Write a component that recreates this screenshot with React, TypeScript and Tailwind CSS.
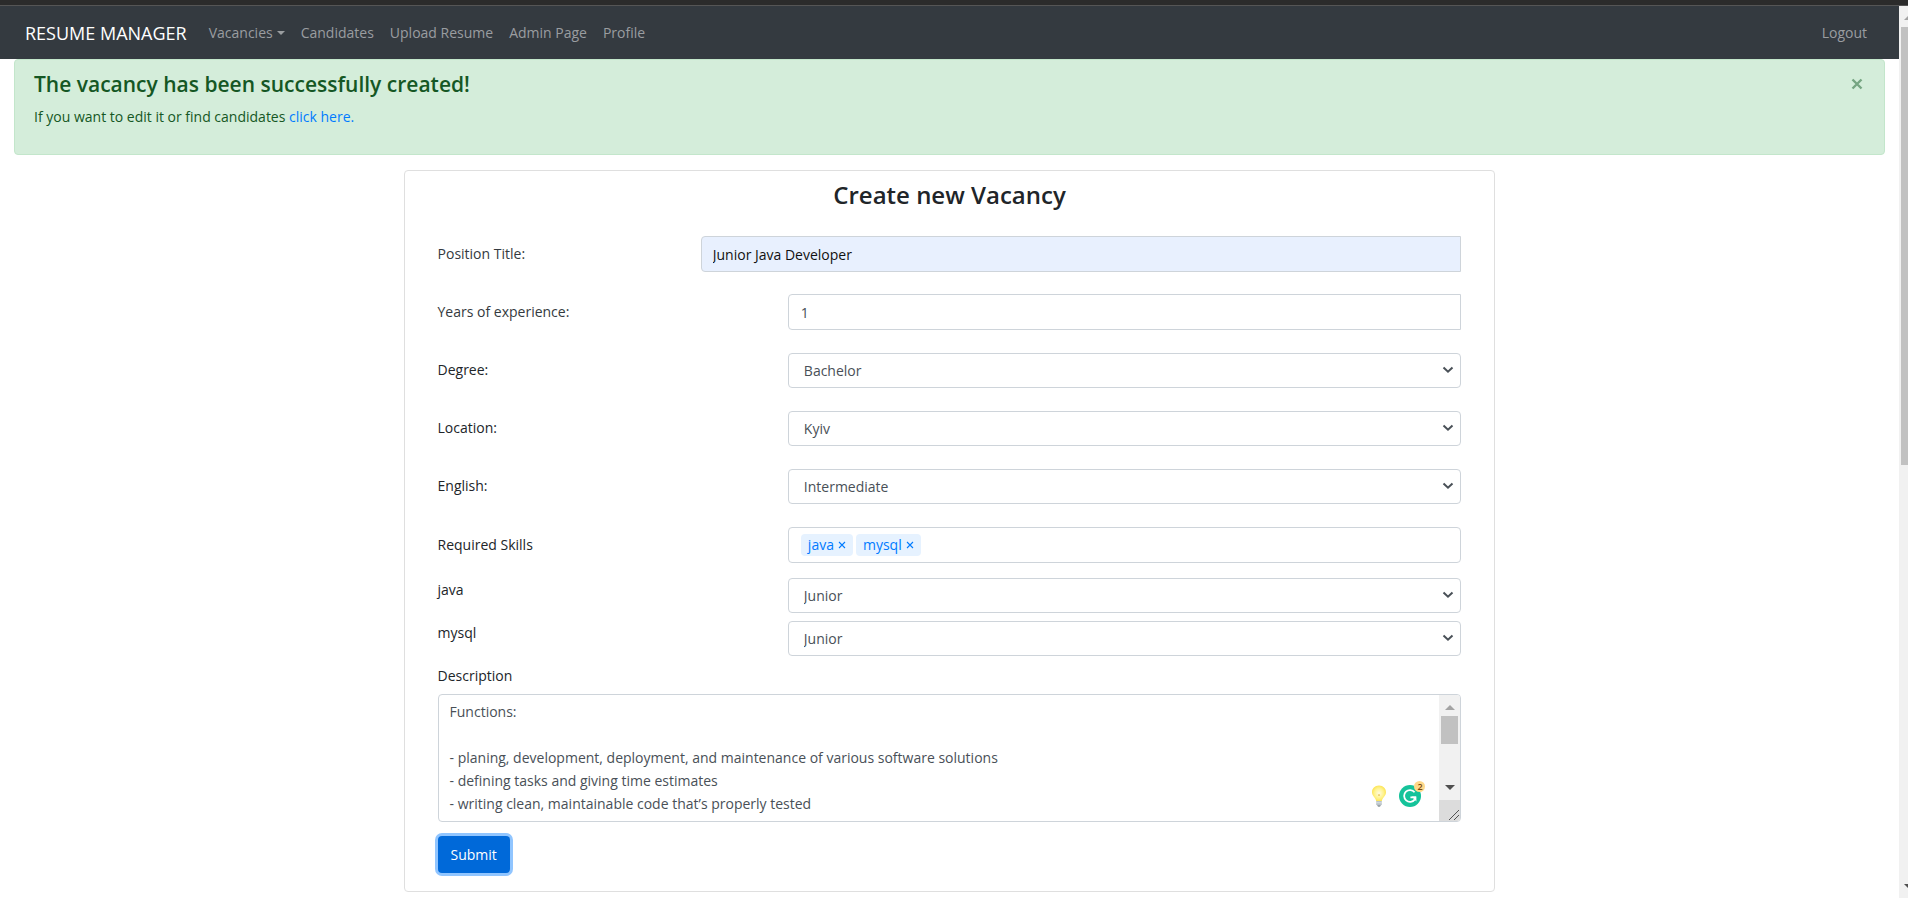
import React, { useState } from "react";

const control =
  "w-full border border-[#ced4da] bg-white text-sm text-[#495057] outline-none";

function SelectBox({ id, options }: { id: string; options: string[] }) {
  return (
    <div className="relative self-end">
      <select id={id} className={`${control} block h-[35px] appearance-none rounded pl-[15px] pr-8`}>
        {options.map((o) => (
          <option key={o}>{o}</option>
        ))}
      </select>
      <svg
        className="pointer-events-none absolute right-[7px] top-[13px] h-2 w-3"
        viewBox="0 0 12 8"
        fill="none"
        stroke="#495057"
        strokeWidth="2"
      >
        <path d="M1.5 1.5 L6 5.7 L10.5 1.5" />
      </svg>
    </div>
  );
}

function SelectRow({ id, label, options }: { id: string; label: string; options: string[] }) {
  return (
    <div className="grid h-9 grid-cols-[350fr_673fr] items-center">
      <label htmlFor={id}>{label}</label>
      <SelectBox id={id} options={options} />
    </div>
  );
}

function LevelRow({ skill }: { skill: string }) {
  const id = `level-${skill}`;
  return (
    <div className="grid grid-cols-[350fr_673fr] items-start">
      <label htmlFor={id} className="leading-6">
        {skill}
      </label>
      <SelectBox id={id} options={["Junior", "Middle", "Senior"]} />
    </div>
  );
}

function Bulb() {
  return (
    <svg className="h-[22px] w-4" viewBox="0 0 16 22">
      <defs>
        <radialGradient id="glow" cx="50%" cy="50%" r="55%">
          <stop offset="0" stopColor="#fffbe0" />
          <stop offset="0.6" stopColor="#fff38c" />
          <stop offset="1" stopColor="#fbe04a" />
        </radialGradient>
      </defs>
      <path
        d="M8 0.5 C3.8 0.5 1 3.5 1 7.2 C1 11 4.6 12.6 5.2 16 H10.8 C11.4 12.6 15 11 15 7.2 C15 3.5 12.2 0.5 8 0.5 Z"
        fill="url(#glow)"
      />
      <path d="M7 10.5 L8 9.6 L9 10.5" stroke="#d9a520" strokeWidth="0.8" fill="none" />
      <path d="M5.2 16 H10.8 V19.5 L9.8 20.5 H6.2 L5.2 19.5 Z" fill="#b9c3c9" />
      <path d="M5.2 17.8 H10.8" stroke="#e3e8ea" strokeWidth="0.8" />
      <path d="M6.2 20.4 H9.8 L9 21.6 H7 Z" fill="#5b666c" />
    </svg>
  );
}

function Checker() {
  return (
    <span className="relative block h-[22px] w-[22px]">
      <svg className="h-[22px] w-[22px]" viewBox="0 0 22 22">
        <circle cx="11" cy="11" r="11" fill="#15c39a" />
        <path
          d="M15.6 7.2 A5.9 5.9 0 1 0 15.8 14.4 M11.4 12.4 H17"
          fill="none"
          stroke="#fff"
          strokeWidth="1.8"
        />
        <path d="M12.6 11.6 H17.4 V16.6 Z" fill="#fff" />
      </svg>
      <span className="absolute -right-1 -top-1 flex h-[11px] w-[11px] items-center justify-center rounded-full bg-[#ffd98a] text-[9px] font-semibold leading-none text-[#7a4a10]">
        2
      </span>
    </span>
  );
}

const DESCRIPTION = `Functions:

- planing, development, deployment, and maintenance of various software solutions
- defining tasks and giving time estimates
- writing clean, maintainable code that’s properly tested`;

export default function App() {
  const [skills, setSkills] = useState(["java", "mysql"]);
  const [open, setOpen] = useState(true);

  return (
    <div className="flex min-h-screen flex-col bg-white font-['Open_Sans','Noto_Sans',sans-serif] text-sm text-[#212529]">
      <div className="h-1.5 border-b border-[#555555] bg-[#2b2b2b]" />
      <div className="flex flex-1">
        <div className="min-w-0 flex-1">
          <nav className="flex h-[53px] items-center bg-[#343a40] pl-[25px] pr-8 text-[#9a9da0]">
            <a href="#home" className="mr-[22px] text-lg text-white">
              RESUME MANAGER
            </a>
            <div className="flex gap-4">
              <a href="#vacancies" className="flex items-center gap-1">
                Vacancies
                <span className="border-x-4 border-t-4 border-x-transparent border-t-[#9a9da0]" />
              </a>
              <a href="#candidates">Candidates</a>
              <a href="#upload">Upload Resume</a>
              <a href="#admin">Admin Page</a>
              <a href="#profile">Profile</a>
            </div>
            <a href="#logout" className="ml-auto">
              Logout
            </a>
          </nav>

          {open && (
            <div
              role="alert"
              className="mx-3.5 flex h-24 items-start justify-between rounded border border-[#c3e6cb] bg-[#d4edda] pl-[19px] pr-[19px] pt-3 text-[#155724]"
            >
              <div>
                <h4 className="mb-2 text-[21px] font-semibold leading-[25px]">
                  The vacancy has been successfully created!
                </h4>
                <p className="leading-[23px]">
                  If you want to edit it or find candidates{" "}
                  <a href="#vacancy" className="text-[#007bff]">
                    click here.
                  </a>
                </p>
              </div>
              <button type="button" aria-label="Close" onClick={() => setOpen(false)} className="pt-1">
                <svg className="h-4 w-4" viewBox="0 0 16 16" stroke="#76a582" strokeWidth="2.4">
                  <path d="M3.5 3.5 L12.5 12.5 M12.5 3.5 L3.5 12.5" />
                </svg>
              </button>
            </div>
          )}

          <form
            onSubmit={(e) => e.preventDefault()}
            className="mx-auto mb-1.5 mt-[15px] w-[57.5%] rounded border border-[#dfdfdf] px-[33px] pb-[18px] pt-2"
          >
            <h3 className="mb-[25px] text-center text-2xl font-semibold leading-8">Create new Vacancy</h3>

            <div className="flex flex-col gap-[22px]">
              <div className="grid h-9 grid-cols-[263fr_760fr] items-center">
                <label htmlFor="title" className="text-[#343a40]">
                  Position Title:
                </label>
                <input
                  id="title"
                  defaultValue="Junior Java Developer"
                  className="h-9 w-full rounded-l border border-[#ced4da] bg-[#e8f0fe] px-[11px] text-sm text-[#111111] outline-none"
                />
              </div>
              <div className="grid h-9 grid-cols-[350fr_673fr] items-center">
                <label htmlFor="years" className="text-[#343a40]">
                  Years of experience:
                </label>
                <input id="years" defaultValue="1" className={`${control} h-9 rounded-l px-3`} />
              </div>
              <SelectRow id="degree" label="Degree:" options={["Bachelor", "Master"]} />
              <SelectRow id="location" label="Location:" options={["Kyiv", "Lviv"]} />
              <SelectRow id="english" label="English:" options={["Intermediate", "Advanced"]} />
              <div className="grid h-[38px] grid-cols-[350fr_673fr] items-center">
                <span>Required Skills</span>
                <div className="flex h-9 items-center gap-[3px] rounded border border-[#ced4da] px-3">
                  {skills.map((s) => (
                    <span
                      key={s}
                      className="flex h-[22px] items-center gap-1 rounded bg-[#e6f2ff] px-[7px] text-[#007bff]"
                    >
                      {s}
                      <button
                        type="button"
                        aria-label={`Remove ${s}`}
                        onClick={() => setSkills(skills.filter((k) => k !== s))}
                      >
                        <svg className="h-2 w-2" viewBox="0 0 8 8" stroke="#007bff" strokeWidth="1.1">
                          <path d="M1 1 L7 7 M7 1 L1 7" />
                        </svg>
                      </button>
                    </span>
                  ))}
                </div>
              </div>
            </div>

            <div className="mb-2 mt-3.5 flex flex-col gap-2">
              {skills.map((s) => (
                <LevelRow key={s} skill={s} />
              ))}
            </div>

            <label htmlFor="description" className="mb-1.5 block leading-6">
              Description
            </label>
            <div className="relative flex h-32 overflow-hidden rounded border border-[#ced4da]">
              <textarea
                id="description"
                defaultValue={DESCRIPTION}
                className="flex-1 resize-none overflow-hidden px-[11px] py-[5px] text-sm leading-[23px] text-[#495057] outline-none"
              />
              <div className="absolute bottom-3.5 right-[39px] flex gap-3">
                <Bulb />
                <Checker />
              </div>
              <div className="flex w-[21px] flex-col items-center bg-[#f1f1f1]">
                <span className="mt-2.5 border-x-[5px] border-b-[5px] border-x-transparent border-b-[#a3a3a3]" />
                <span className="mt-1.5 h-7 w-[17px] bg-[#c1c1c1]" />
                <span className="mb-2.5 mt-auto border-x-[5px] border-t-[5px] border-x-transparent border-t-[#505050]" />
                <svg className="h-[21px] w-[21px] bg-[#dcdcdc]" viewBox="0 0 21 21" stroke="#505050">
                  <path d="M10 20 L20 10 M15 20 L20 15" />
                </svg>
              </div>
            </div>

            <button
              type="submit"
              className="mt-3.5 h-[37px] rounded bg-[#0069d9] px-[13px] text-white ring-[3px] ring-[#90c5ff]"
            >
              Submit
            </button>
          </form>
        </div>

        <div className="flex w-[9px] flex-col overflow-hidden bg-[#f1f1f1] pl-0.5">
          <span className="ml-[3px] mt-2.5 w-0 border-x-[4px] border-b-[4px] border-x-transparent border-b-[#a3a3a3]" />
          <span className="mt-[7px] h-[438px] bg-[#c1c1c1]" />
          <span className="mb-2.5 ml-[3px] mt-auto w-0 border-x-[4px] border-t-[4px] border-x-transparent border-t-[#505050]" />
        </div>
      </div>
      <div className="h-px bg-[#2d1418]" />
    </div>
  );
}
